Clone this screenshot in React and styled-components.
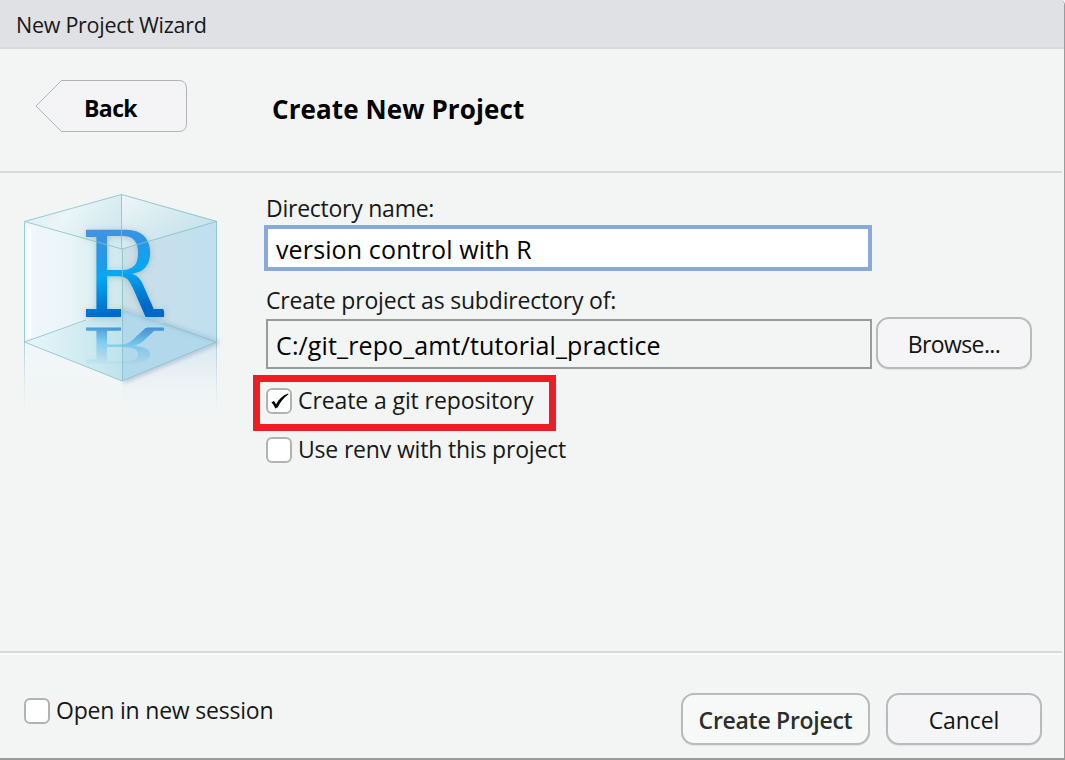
import React from 'react';
import styled, { createGlobalStyle } from 'styled-components';

const GlobalStyle = createGlobalStyle`
  *, *::before, *::after { box-sizing: border-box; }
  body { margin: 0; background: #f3f5f5; }
`;

const Dialog = styled.div`
  width: 1065px;
  height: 760px;
  display: flex;
  flex-direction: column;
  background: #f3f5f4;
  border-right: 1px solid #9a9c9c;
  border-bottom: 2px solid #999b9a;
  border-top-right-radius: 5px;
  overflow: hidden;
  color: #161819;
  font-family: 'Open Sans', 'Noto Sans', sans-serif;
  font-size: 23px;
`;

const Label = styled.span`
  display: block;
  white-space: nowrap;
  line-height: ${(p) => p.$line || 30}px;
  font-size: ${(p) => p.$size || 23}px;
  font-weight: ${(p) => p.$weight || 400};
  letter-spacing: ${(p) => p.$spacing || 0}px;
`;

const TitleBar = styled.header`
  height: 49px;
  padding: 10px 16px 0;
  background: #e0e1e5;
  border-bottom: 2px solid #d8d9dd;
`;

const Heading = styled.section`
  height: 124px;
  margin-right: 2px;
  display: flex;
  align-items: flex-start;
  padding: 31px 0 0 35px;
  border-bottom: 2px solid #d8dada;
`;

const BackButton = styled.button`
  width: 152px;
  height: 52px;
  padding: 0 0 0 49px;
  border: 0;
  display: grid;
  align-items: center;
  text-align: left;
  background: none;
  font-family: inherit;
  color: #000;
  & > * { grid-area: 1 / 1; }
  & > svg { margin-left: -49px; }
  & > span { position: relative; top: 2px; }
`;

const PageTitle = styled.h1`
  margin: 9px 0 0 85px;
  font-size: 26px;
  color: #000;
`;

const Body = styled.main`
  height: 478px;
  display: flex;
`;

const LogoColumn = styled.div`
  width: 264px;
  padding: 17px 0 0 14px;
`;

const Form = styled.div`
  display: flex;
  flex-direction: column;
  padding-top: 20px;
`;

const FieldLabel = styled.label`
  height: ${(p) => p.$height || 30}px;
  padding: ${(p) => p.$top || 0}px 0 0 2px;
`;

const NameInput = styled.div`
  width: 608px;
  height: 46px;
  margin-top: 2px;
  padding: 5px 0 0 8px;
  border: 4px solid #89a9db;
  background: #fff;
  color: #000;
`;

const PathRow = styled.div`
  display: flex;
  align-items: flex-start;
  gap: 4px;
  height: 52px;
  margin-left: 2px;
`;

const PathInput = styled.div`
  width: 606px;
  height: 50px;
  margin-top: 2px;
  padding: 9px 0 0 8px;
  border: 2px solid #999b9b;
  color: #000;
`;

const Button = styled.button`
  width: ${(p) => p.$width}px;
  height: 52px;
  padding: 2px 0 0;
  display: flex;
  align-items: center;
  justify-content: center;
  border: 2px solid #b9baba;
  border-radius: 13px;
  background: ${(p) => (p.$primary ? '#f7f9f8' : '#f5f5f8')};
  color: ${(p) => (p.$primary ? '#2b2e2f' : '#111314')};
  box-shadow: 0 1px 1px #e2e4e4;
  font-family: inherit;
`;

const Highlight = styled.div`
  width: 303px;
  height: 56px;
  margin: 6px 0 0 -11px;
  padding: 6px 0 0 6px;
  border: 7px solid #ee1c24;
`;

const RenvRow = styled.div`
  margin: 6px 0 0 2px;
`;

const Option = styled.div`
  display: flex;
  align-items: flex-start;
  gap: 6px;
`;

const OptionText = styled.div`
  margin-top: -3px;
`;

const Box = styled.div`
  width: 26px;
  height: 26px;
  border: 2px solid #b1b2b2;
  border-radius: 6px;
  background: #fff;
  & > svg { display: block; }
`;

const Footer = styled.footer`
  flex: 1;
  margin-right: 2px;
  border-top: 2px solid #d8dada;
  box-shadow: inset 0 2px 0 #fafbfb;
  display: flex;
  align-items: flex-start;
  justify-content: space-between;
  padding: 40px 20px 0 24px;
`;

const FooterOption = styled.div`
  padding-top: 5px;
`;

const Actions = styled.div`
  display: flex;
  gap: 16px;
`;

function Checkbox({ checked, label, spacing }) {
  return (
    <Option>
      <Box>
        {checked && (
          <svg width="22" height="22" viewBox="0 0 22 22">
            <path
              d="M3.4 12.4 L5.8 11 C6.9 11.8 7.5 13.2 8 14.6 C10.4 9.4 14.4 5.4 20.2 3.4 L20.5 4.3 C15.6 7.6 12.4 12.2 9.8 17.2 L7.2 18.4 C6.4 16 5.2 13.8 3.4 12.4 Z"
              fill="#000"
            />
          </svg>
        )}
      </Box>
      <OptionText>
        <Label $spacing={spacing}>{label}</Label>
      </OptionText>
    </Option>
  );
}

function CubeLogo() {
  return (
    <svg width="220" height="240" viewBox="14 190 220 240">
      <defs>
        <linearGradient id="left" x1="0" x2="1">
          <stop offset="0" stopColor="#f2f7fc" />
          <stop offset=".45" stopColor="#eaf5f8" />
          <stop offset="1" stopColor="#cde8ec" />
        </linearGradient>
        <linearGradient id="right" x1="0" x2="1">
          <stop offset="0" stopColor="#cbdfe6" />
          <stop offset="1" stopColor="#c1dff1" />
        </linearGradient>
        <linearGradient id="topLeft" x1="0" y1="0" x2="1" y2=".4">
          <stop offset="0" stopColor="#d6edf2" />
          <stop offset=".5" stopColor="#eaf5f8" />
          <stop offset="1" stopColor="#d3eaf0" />
        </linearGradient>
        <linearGradient id="topRight" x1="0" y1="0" x2="1" y2="1">
          <stop offset="0" stopColor="#eef6f8" />
          <stop offset="1" stopColor="#b9dce8" />
        </linearGradient>
        <linearGradient id="floorLeft" x1="0" x2="1">
          <stop offset="0" stopColor="#e9f6fb" />
          <stop offset="1" stopColor="#bfe3eb" />
        </linearGradient>
        <linearGradient id="below" x1="0" y1="0" x2="0" y2="1">
          <stop offset=".1" stopColor="#d3e6f3" stopOpacity=".75" />
          <stop offset="1" stopColor="#eef3f6" stopOpacity="0" />
        </linearGradient>
        <linearGradient id="belowLeft" x1="0" y1="0" x2="0" y2="1">
          <stop offset="0" stopColor="#f0f7fa" />
          <stop offset="1" stopColor="#f3f6f7" stopOpacity="0" />
        </linearGradient>
        <linearGradient id="edge" gradientUnits="userSpaceOnUse" x1="0" y1="342" x2="0" y2="417">
          <stop offset="0" stopColor="#a9d0da" />
          <stop offset="1" stopColor="#dfeaee" stopOpacity="0" />
        </linearGradient>
        <linearGradient id="letter" gradientUnits="userSpaceOnUse" x1="112" y1="229" x2="134" y2="317">
          <stop offset="0" stopColor="#3f94e1" />
          <stop offset=".22" stopColor="#2b95e6" />
          <stop offset=".5" stopColor="#05a8f4" />
          <stop offset=".9" stopColor="#0069c8" />
        </linearGradient>
        <linearGradient id="fade" gradientUnits="userSpaceOnUse" x1="0" y1="327" x2="0" y2="364">
          <stop offset="0" stopColor="#fff" stopOpacity=".65" />
          <stop offset=".12" stopColor="#fff" stopOpacity=".55" />
          <stop offset="1" stopColor="#fff" stopOpacity=".04" />
        </linearGradient>
        <mask id="mirrorMask" maskUnits="userSpaceOnUse" x="80" y="326" width="90" height="40">
          <rect x="80" y="326" width="90" height="40" fill="url(#fade)" />
        </mask>
        <filter id="soft" x="-20%" y="-20%" width="140%" height="140%">
          <feGaussianBlur stdDeviation="2" />
        </filter>
        <filter id="shade" x="-20%" y="-20%" width="140%" height="140%">
          <feDropShadow dx="0" dy="1" stdDeviation="3" floodColor="#476777" floodOpacity=".3" />
        </filter>
      </defs>

      <path d="M24 342 L122 381 V417 H24 Z" fill="url(#belowLeft)" />
      <path d="M122 381 L217 342 V417 H122 Z" fill="url(#below)" />
      <path d="M24.5 342 V417 M216.5 342 V417" stroke="url(#edge)" />
      <path d="M124 381 L218 342" stroke="#8796bd" strokeWidth="3" opacity=".65" filter="url(#soft)" />

      <path d="M24 221 L122 194 V309 L24 342 Z" fill="url(#left)" />
      <path d="M122 194 L217 221 V342 L122 309 Z" fill="url(#right)" />
      <path d="M24 342 L122 309 V381 Z" fill="url(#floorLeft)" />
      <path d="M122 309 L217 342 L122 381 Z" fill="#b1d9eb" />
      <path d="M122 309 L217 341" stroke="#6b97b8" strokeWidth="2" opacity=".5" filter="url(#soft)" />
      <path d="M29 228 V338" stroke="#fff" strokeWidth="4" opacity=".8" />
      <path d="M24 221 L122 194 V249 Z" fill="url(#topLeft)" />
      <path d="M122 194 L217 221 L122 249 Z" fill="url(#topRight)" />

      <g filter="url(#shade)">
        <g id="mark" fill="url(#letter)">
          <text
            x="80.5"
            y="317"
            fontFamily="'DejaVu Serif', serif"
            fontSize="120"
            textLength="81"
            lengthAdjust="spacingAndGlyphs"
          >
            R
          </text>
          <rect x="86" y="309" width="35" height="8" />
          <rect x="147" y="309" width="16.5" height="8" />
          <rect x="86" y="230" width="14" height="7" />
        </g>
      </g>
      <g mask="url(#mirrorMask)">
        <use href="#mark" transform="translate(0 454.3) scale(1 -.4)" />
      </g>

      <path
        d="M24.5 221.5 L121.5 194.5 L216.5 221.5 L122 249 Z M24.5 221.5 V342 L122 381 L216.5 342 V221.5 M121.5 194.5 V249 M122.5 249 V381 M24.5 342 L86 320 M163 323 L216.5 342"
        fill="none"
        stroke="#87bfc8"
        strokeWidth="1"
        opacity=".8"
      />
    </svg>
  );
}

export default function App() {
  return (
    <>
      <GlobalStyle />
      <Dialog>
        <TitleBar>
          <Label $size={21.5} $spacing={-0.27}>New Project Wizard</Label>
        </TitleBar>
        <Heading>
          <BackButton>
            <svg width="152" height="52" viewBox="0 0 152 52">
              <path
                d="M26.5 .5 H143.5 Q151.5 .5 151.5 8.5 V43.5 Q151.5 51.5 143.5 51.5 H26.5 L1 26 Z"
                fill="#f4f4f6"
                stroke="#b1b2b2"
              />
            </svg>
            <Label $weight={700} $spacing={-0.6}>Back</Label>
          </BackButton>
          <PageTitle>
            <Label $weight={700} $line={40} $size={26} $spacing={0.1}>Create New Project</Label>
          </PageTitle>
        </Heading>
        <Body>
          <LogoColumn>
            <CubeLogo />
          </LogoColumn>
          <Form>
            <FieldLabel>
              <Label $spacing={-0.25}>Directory name:</Label>
            </FieldLabel>
            <NameInput>
              <Label $size={25} $spacing={0.13}>version control with R</Label>
            </NameInput>
            <FieldLabel $height={46} $top={14}>
              <Label $spacing={-0.19}>Create project as subdirectory of:</Label>
            </FieldLabel>
            <PathRow>
              <PathInput>
                <Label $size={25} $spacing={0.13}>C:/git_repo_amt/tutorial_practice</Label>
              </PathInput>
              <Button $width={156}>
                <Label $spacing={-0.6}>Browse...</Label>
              </Button>
            </PathRow>
            <Highlight>
              <Checkbox checked label="Create a git repository" spacing={-0.1} />
            </Highlight>
            <RenvRow>
              <Checkbox label="Use renv with this project" spacing={-0.18} />
            </RenvRow>
          </Form>
        </Body>
        <Footer>
          <FooterOption>
            <Checkbox label="Open in new session" spacing={-0.2} />
          </FooterOption>
          <Actions>
            <Button $width={189} $primary>
              <Label $weight={600} $spacing={-0.28}>Create Project</Label>
            </Button>
            <Button $width={156}>
              <Label $spacing={-0.1}>Cancel</Label>
            </Button>
          </Actions>
        </Footer>
      </Dialog>
    </>
  );
}
